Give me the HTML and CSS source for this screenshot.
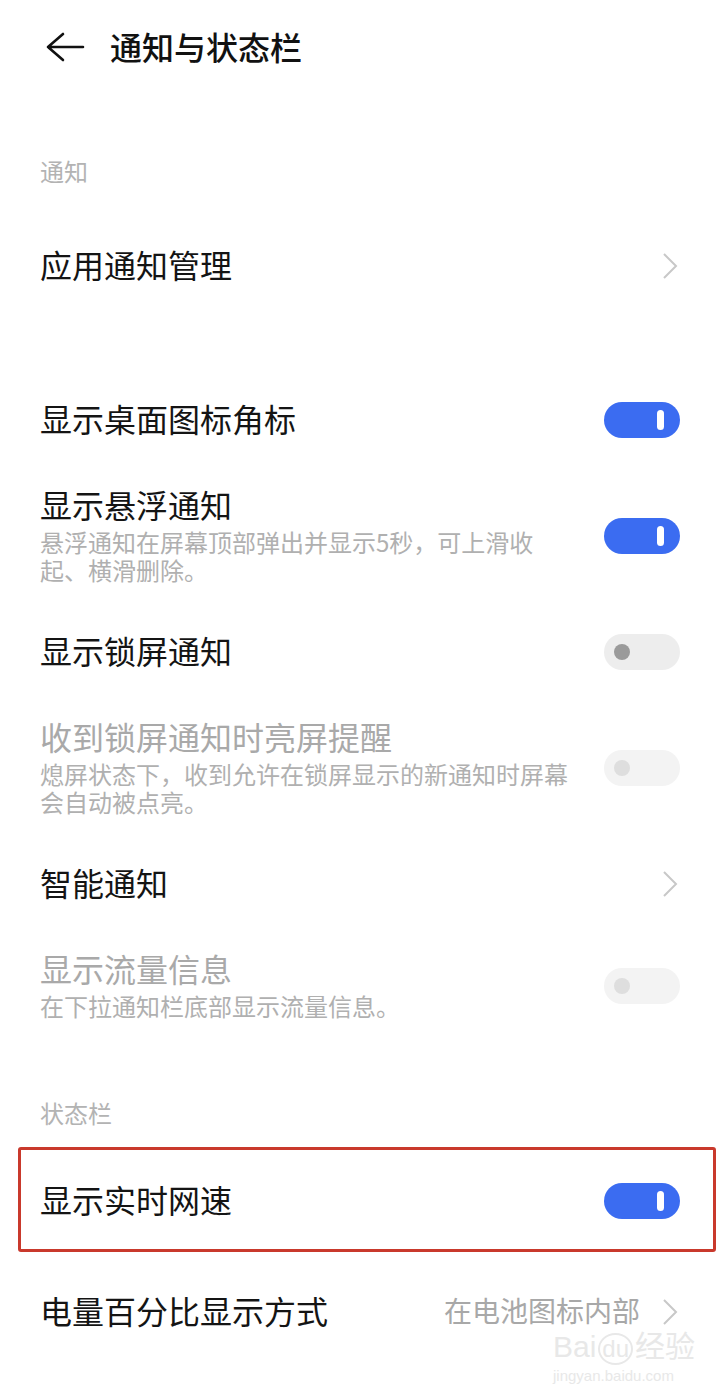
FILE: index.html
```html
<!DOCTYPE html>
<html>
<head>
    <title>通知与状态栏</title>
    <link rel="stylesheet" href="styles.css">
</head>
<body>
    <header class="topbar">
        <svg class="back" width="40" height="32" viewBox="0 0 40 32">
            <path d="M18 3 L3 16 L18 29 M3 16 H38" fill="none" stroke="#111" stroke-width="2.6" stroke-linecap="round" stroke-linejoin="round"/>
        </svg>
        <h1>通知与状态栏</h1>
    </header>

    <div class="section-label first">通知</div>
    <div class="row">
        <div class="text"><div class="title">应用通知管理</div></div>
        <svg class="chevron" width="16" height="28" viewBox="0 0 16 28"><path d="M2 2 L14 14 L2 26" fill="none" stroke="#c8c8c8" stroke-width="2"/></svg>
    </div>

    <div class="group-gap"></div>

    <div class="row">
        <div class="text"><div class="title">显示桌面图标角标</div></div>
        <div class="switch on"><span class="knob"></span></div>
    </div>
    <div class="row">
        <div class="text">
            <div class="title">显示悬浮通知</div>
            <div class="desc">悬浮通知在屏幕顶部弹出并显示5秒，可上滑收起、横滑删除。</div>
        </div>
        <div class="switch on"><span class="knob"></span></div>
    </div>
    <div class="row">
        <div class="text"><div class="title">显示锁屏通知</div></div>
        <div class="switch off"><span class="knob"></span></div>
    </div>
    <div class="row disabled">
        <div class="text">
            <div class="title">收到锁屏通知时亮屏提醒</div>
            <div class="desc">熄屏状态下，收到允许在锁屏显示的新通知时屏幕会自动被点亮。</div>
        </div>
        <div class="switch off"><span class="knob"></span></div>
    </div>
    <div class="row">
        <div class="text"><div class="title">智能通知</div></div>
        <svg class="chevron" width="16" height="28" viewBox="0 0 16 28"><path d="M2 2 L14 14 L2 26" fill="none" stroke="#c8c8c8" stroke-width="2"/></svg>
    </div>
    <div class="row disabled">
        <div class="text">
            <div class="title">显示流量信息</div>
            <div class="desc">在下拉通知栏底部显示流量信息。</div>
        </div>
        <div class="switch off"><span class="knob"></span></div>
    </div>

    <div class="section-label second">状态栏</div>
    <div class="highlight">
        <div class="row">
            <div class="text"><div class="title">显示实时网速</div></div>
            <div class="switch on"><span class="knob"></span></div>
        </div>
    </div>
    <div class="row last">
        <div class="text"><div class="title">电量百分比显示方式</div></div>
        <span class="value">在电池图标内部</span>
        <svg class="chevron" width="16" height="28" viewBox="0 0 16 28"><path d="M2 2 L14 14 L2 26" fill="none" stroke="#c8c8c8" stroke-width="2"/></svg>
    </div>

    <div class="watermark">
        <div class="wm-logo">Bai<span class="wm-du">du</span>经验</div>
        <div class="wm-url">jingyan.baidu.com</div>
    </div>
</body>
</html>
```

FILE: styles.css
```css
body {
    margin: 0;
    background: #fff;
    font-family: "Noto Sans CJK SC", "Noto Sans", sans-serif;
    color: #141414;
    position: relative;
    min-height: 1384px;
    overflow: hidden;
}
.topbar {
    height: 92px;
    display: flex;
    align-items: center;
    padding-left: 45px;
}
.back {
    margin-right: 25px;
    margin-top: 2px;
}
.topbar h1 {
    margin: 0;
    font-size: 32px;
    font-weight: 500;
    line-height: 40px;
    color: #111;
}
.section-label {
    font-size: 24px;
    line-height: 32px;
    color: #b3b3b3;
    padding: 0 40px;
}
.section-label.first {
    margin-top: 63px;
    margin-bottom: 34px;
}
.section-label.second {
    margin-top: 54px;
    margin-bottom: 18px;
}
.group-gap {
    height: 68px;
}
.row {
    display: flex;
    align-items: center;
    padding: 23px 40px;
    gap: 30px;
}
.row .text {
    flex: 1;
    min-width: 0;
}
.title {
    font-size: 32px;
    line-height: 40px;
    color: #141414;
}
.desc {
    margin-top: 4px;
    font-size: 24px;
    line-height: 28px;
    color: #b0b0b0;
    line-break: strict;
}
.row.disabled .title {
    color: #a9a9a9;
}
.chevron {
    flex: none;
    margin-right: 2px;
    margin-top: 4px;
}
.value {
    font-size: 28px;
    line-height: 40px;
    color: #a8a8a8;
    margin-right: -8px;
}
.switch {
    flex: none;
    width: 76px;
    height: 36px;
    border-radius: 18px;
    position: relative;
    margin-top: 4px;
}
.switch.on {
    background: #3b6cf1;
}
.switch.on .knob {
    position: absolute;
    right: 16px;
    top: 8px;
    width: 7px;
    height: 20px;
    border-radius: 4px;
    background: #fff;
}
.switch.off {
    background: #ededed;
}
.switch.off .knob {
    position: absolute;
    left: 10px;
    top: 10px;
    width: 16px;
    height: 16px;
    border-radius: 50%;
    background: #9a9a9a;
}
.row.disabled .switch.off {
    background: #f3f3f3;
}
.row.disabled .switch.off .knob {
    background: #dedede;
}
.highlight {
    margin: 0 4px 0 18px;
    border: 3px solid #c9392c;
    border-radius: 3px;
}
.highlight .row {
    padding: 29px 33px 30px 19px;
}
.row.last {
    margin-top: 15px;
}
.watermark {
    position: absolute;
    left: 553px;
    top: 1330px;
    color: #e8e8e8;
    font-family: "Liberation Sans", "Noto Sans CJK SC", sans-serif;
}
.wm-logo {
    font-size: 30px;
    line-height: 34px;
}
.wm-du {
    display: inline-block;
    border: 2px solid #e8e8e8;
    border-radius: 50%;
    padding: 0 2px;
    font-size: 24px;
    line-height: 28px;
    margin: 0 2px;
}
.wm-url {
    font-size: 15px;
    line-height: 18px;
    margin-top: 2px;
}
```
